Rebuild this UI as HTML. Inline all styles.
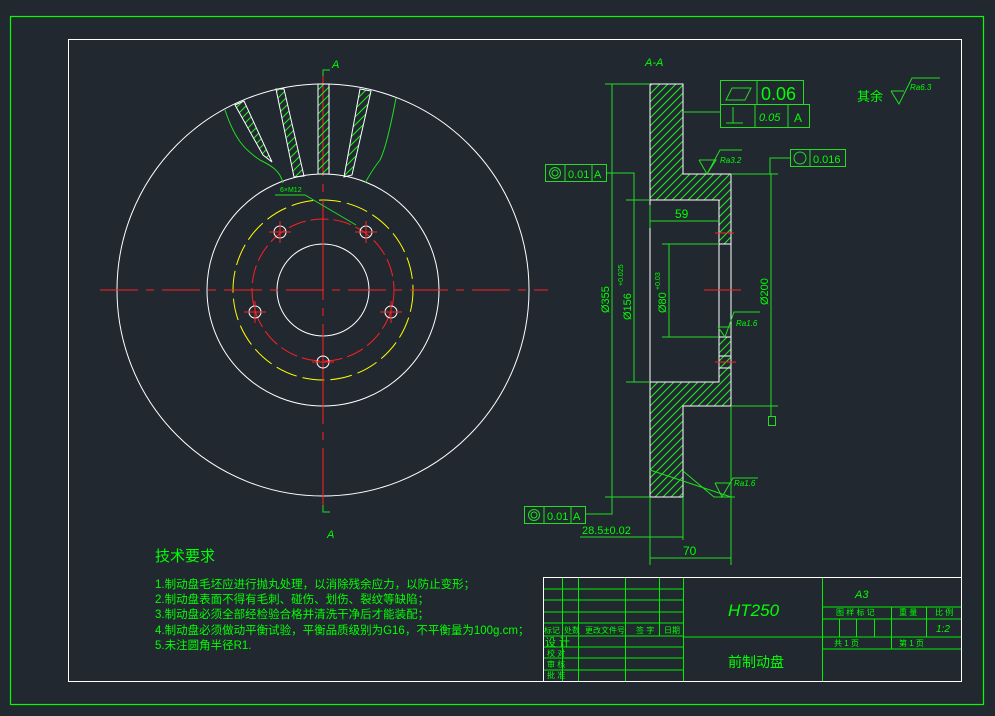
<!DOCTYPE html>
<html><head><meta charset="utf-8"><style>
html,body{margin:0;padding:0;background:#212830;}
svg{display:block}
text{font-family:"Liberation Sans","Noto Sans CJK SC",sans-serif;fill:#00ff00}
</style></head><body>
<svg width="995" height="716" viewBox="0 0 995 716" xmlns="http://www.w3.org/2000/svg">
<defs>
<pattern id="h" patternUnits="userSpaceOnUse" width="8" height="8">
<path d="M0,8L8,0M-2,2L2,-2M6,10L10,6" stroke="#22ee22" stroke-width="1"/>
</pattern>
</defs>
<rect width="995" height="716" fill="#212830"/>
<!-- frames -->
<rect x="10.5" y="16.5" width="973" height="688" fill="none" stroke="#00ff00" stroke-width="1.2"/>
<rect x="68.5" y="39.5" width="893" height="642" fill="none" stroke="#fff" stroke-width="1"/>

<!-- LEFT VIEW -->
<g fill="none" stroke-width="1">
<circle cx="323" cy="290" r="206" stroke="#fff"/>
<circle cx="323" cy="290" r="116" stroke="#fff"/>
<circle cx="323" cy="290" r="46" stroke="#fff"/>
<circle cx="323" cy="290" r="90" stroke="#ffff00" stroke-dasharray="22,6"/>
<circle cx="323" cy="290" r="71" stroke="#ff2020" stroke-dasharray="18,5"/>
<line x1="100" y1="290" x2="548" y2="290" stroke="#ff2020" stroke-dasharray="38,8,8,8"/>
<line x1="323" y1="76" x2="323" y2="505" stroke="#ff2020" stroke-dasharray="100,8,8,8"/>
<!-- vanes -->
<polygon points="235,105 244,101 272,162 263,155" fill="url(#h)" stroke="#fff"/>
<polygon points="276,89 284,89 304,176 294,177" fill="url(#h)" stroke="#fff"/>
<polygon points="318,84 329,84 329,174 318,174" fill="url(#h)" stroke="#fff"/>
<polygon points="360,89 371,91 352,175 344,177" fill="url(#h)" stroke="#fff"/>
<path d="M225,110 C235,140 245,150 260,160 C270,165 280,170 283,183" stroke="#22dd22"/>
<path d="M396,98 C390,130 385,150 380,160 C372,170 368,178 365,183" stroke="#22dd22"/>
<!-- bolt holes -->
<g stroke="#fff"><circle cx="280" cy="232" r="6"/><circle cx="366" cy="232" r="6"/><circle cx="255" cy="312" r="6"/><circle cx="391" cy="312" r="6"/><circle cx="323" cy="362" r="6"/></g>
<g stroke="#ff2020">
<path d="M269,232H291M280,221V243M355,232H377M366,221V243M244,312H266M255,301V323M380,312H402M391,301V323M312,362H334"/>
</g>
<!-- leader -->
<path d="M275,195H305L356,225" stroke="#22dd22"/>
<!-- section markers -->
<path d="M323,76V70H330M323,505V512H330" stroke="#22dd22"/>
</g>
<text x="280" y="192" font-size="7">6×M12</text>
<text x="332" y="68" font-size="11" font-style="italic">A</text>
<text x="327" y="538" font-size="11" font-style="italic">A</text>

<!-- SECTION VIEW -->
<g fill="none" stroke-width="1">
<path d="M650,84H683V174H731V244H719V200H650Z" fill="url(#h)" stroke="none"/>
<path d="M650,382H719V337H731V406H683V497H650Z" fill="url(#h)" stroke="none"/>
<path d="M650,84H683V174H731V406H683V497H650Z M650,200H719V382H650 M719,244H731 M719,337H731 M719,356H731 M719,368H731" stroke="#fff"/>
<!-- center marks -->
<path d="M704,290H741M715,233H734M715,362H736" stroke="#ff2020"/>
<!-- dims -->
<g stroke="#22dd22">
<path d="M605,84H650M612,84V497M605,497H650"/>
<path d="M626,200H650M634,200V382M626,382H650"/>
<path d="M662,244H719M669,244V337M662,337H719"/>
<path d="M731,174H778M771,174V406M731,406H778"/>
<path d="M650,205V228M650,221H719"/>
<path d="M650,497V565M731,406V565M650,558H731"/>
<path d="M580,537H683M683,497V540"/>
<path d="M683,112H720"/>
<rect x="720.5" y="80.5" width="83" height="24"/><line x1="757" y1="80" x2="757" y2="104"/>
<rect x="720.5" y="104.5" width="89" height="23"/><path d="M755,104V128M788,104V128"/>
<path d="M733,107V123M726,123H743" />
<path d="M726,100L732,88H751L745,100Z"/>
<rect x="790.5" y="149.5" width="55" height="17"/><line x1="810" y1="149" x2="810" y2="167"/>
<circle cx="800" cy="158" r="6"/>
<path d="M790,158H770V174"/>
<rect x="545.5" y="164.5" width="61" height="17"/><path d="M565,164V182M592,164V182"/>
<circle cx="555" cy="173" r="5.5"/><circle cx="555" cy="173" r="3"/>
<path d="M606,173H634V200"/>
<rect x="524.5" y="506.5" width="61" height="17"/><path d="M544,506V524M571,506V524"/>
<circle cx="534" cy="515" r="5.5"/><circle cx="534" cy="515" r="3"/>
<path d="M585,514H612V497"/>
<rect x="768.5" y="416.5" width="7" height="9"/>
<path d="M771,406V416"/>
<!-- roughness -->
<path d="M699,160L707,174L716,160H699M707,174L720,150H742"/>
<path d="M718,327L725,337L734,312H760M718,327H731"/>
<path d="M715,483L722,497L733,478H758M715,483H731"/>
<path d="M650,470L731,497M683,471L714,497H735"/>
<path d="M891,91L899,104L912,78H940M891,91H904"/>
</g>
</g>
<g font-size="11">
<text x="645" y="66" font-style="italic">A-A</text>
<text x="761" y="100" font-size="18">0.06</text>
<text x="759" y="121" font-style="italic">0.05</text>
<text x="794" y="122" font-size="12">A</text>
<text x="813" y="163" font-size="11">0.016</text>
<text x="568" y="178" font-size="11">0.01</text>
<text x="594" y="178" font-size="11">A</text>
<text x="547" y="520" font-size="11">0.01</text>
<text x="573" y="520" font-size="11">A</text>
<text x="675" y="218" font-size="12">59</text>
<text x="683" y="555" font-size="12">70</text>
<text x="582" y="534" font-size="11">28.5±0.02</text>
<text x="720" y="163" font-size="8" font-style="italic">Ra3.2</text>
<text x="736" y="326" font-size="8" font-style="italic">Ra1.6</text>
<text x="734" y="486" font-size="8" font-style="italic">Ra1.6</text>
<text x="910" y="90" font-size="8" font-style="italic">Ra6.3</text>
<text x="857" y="101" font-size="13">其余</text>
<text transform="translate(609,313) rotate(-90)" font-size="11">Ø355</text>
<text transform="translate(631,320) rotate(-90)" font-size="11">Ø156</text>
<text transform="translate(623,286) rotate(-90)" font-size="7">+0.025</text>
<text transform="translate(666,313) rotate(-90)" font-size="11">Ø80</text>
<text transform="translate(660,290) rotate(-90)" font-size="7">+0.03</text>
<text transform="translate(768,305) rotate(-90)" font-size="11">Ø200</text>
</g>

<!-- TECH REQUIREMENTS -->
<text x="155" y="561" font-size="15">技术要求</text>
<g font-size="11.5">
<text x="155" y="588">1.制动盘毛坯应进行抛丸处理，以消除残余应力，以防止变形；</text>
<text x="155" y="603">2.制动盘表面不得有毛刺、碰伤、划伤、裂纹等缺陷；</text>
<text x="155" y="618">3.制动盘必须全部经检验合格并清洗干净后才能装配；</text>
<text x="155" y="634">4.制动盘必须做动平衡试验，平衡品质级别为G16，不平衡量为100g.cm；</text>
<text x="155" y="649">5.未注圆角半径R1.</text>
</g>

<!-- TITLE BLOCK -->
<g fill="none" stroke="#00ee00" stroke-width="1">
<path d="M543.5,577V681M562.5,577V681M578.5,577V681M625.5,577V681M659.5,577V636M683.5,577V681M822.5,577V681"/>
<path d="M543,589H683M543,600H683M543,612H683M543,623H683M543,636H683M543,647H683M543,658H683M543,670H683"/>
<path d="M683,637H961M822,607H961M822,619H961M822,649H961M891.5,607V649M926.5,607V637M839.5,619V637M856.5,619V637M874.5,619V637"/>
</g>
<line x1="543" y1="577.5" x2="961" y2="577.5" stroke="#fff"/>
<line x1="543.5" y1="577" x2="543.5" y2="681" stroke="#fff"/>
<g font-size="8">
<text x="544" y="633">标记</text><text x="564" y="633">处数</text><text x="585" y="633">更改文件号</text><text x="636" y="633">签 字</text><text x="664" y="633">日期</text>
<text x="545" y="646" font-size="11">设 计</text><text x="547" y="667">审 核</text><text x="547" y="678">批 准</text><text x="547" y="656">校 对</text>
<text x="836" y="615">图 样 标 记</text><text x="899" y="615">重 量</text><text x="935" y="615">比 例</text>
<text x="834" y="646">共   1   页</text><text x="899" y="646">第   1   页</text>
</g>
<text x="728" y="616" font-size="17" font-style="italic">HT250</text>
<text x="855" y="598" font-size="11" font-style="italic">A3</text>
<text x="936" y="632" font-size="10" font-style="italic">1:2</text>
<text x="728" y="667" font-size="14">前制动盘</text>
</svg>
</body></html>
